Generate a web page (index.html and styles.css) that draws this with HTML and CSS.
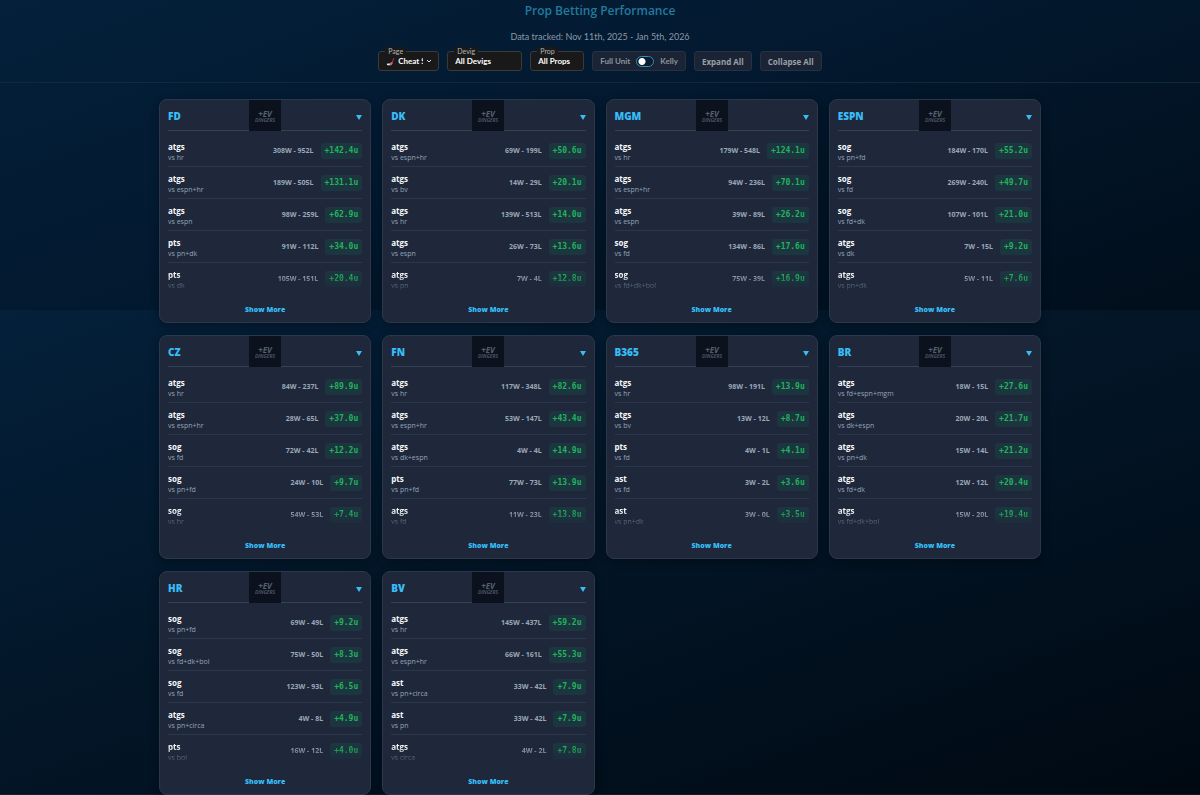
FILE: index.html
```html
<!DOCTYPE html>
<html lang="en">
<head>
  <meta charset="UTF-8" />
  <meta name="viewport" content="width=device-width, initial-scale=1.0"/>
  <title>Prop Betting Performance</title>
  <link rel="stylesheet" href="styles.css">
</head>
<body>

  <header class="page-header">
    <h1>Prop Betting Performance</h1>
    <p class="tracked">Data tracked: Nov 11th, 2025 - Jan 5th, 2026</p>

    <div class="controls">
      <div class="field field-page">
        <label for="pageSelect">Page</label>
        <svg class="stick" viewBox="0 0 16 16" aria-hidden="true">
          <path d="M14 2 11 10" stroke="#b02a3c" stroke-width="2" fill="none"/>
          <path d="M10 11 8 13H3" stroke="#ece6e8" stroke-width="3" fill="none" stroke-linejoin="round" stroke-linecap="round"/>
          <path d="M11 10 7 14" stroke="#d8404c" stroke-width="2"/>
        </svg>
        <select id="pageSelect">
          <option>Cheat Sheet</option>
        </select>
        <svg class="chevron" viewBox="0 0 8 8" aria-hidden="true"><path d="M2 3 4 5 6 3" stroke="#ddd" fill="none"/></svg>
      </div>
      <div class="field field-devig">
        <label for="devigSelect">Devig</label>
        <select id="devigSelect">
          <option>All Devigs</option>
        </select>
      </div>
      <div class="field field-prop">
        <label for="propSelect">Prop</label>
        <select id="propSelect">
          <option>All Props</option>
        </select>
      </div>
      <label class="toggle" for="kellyToggle">
        <span>Full Unit</span>
        <input type="checkbox" role="switch" id="kellyToggle">
        <span>Kelly</span>
      </label>
      <button class="btn" id="expandAll">Expand All</button>
      <button class="btn" id="collapseAll">Collapse All</button>
    </div>
  </header>

  <main class="grid" id="grid"></main>

  <script src="script.js"></script>
</body>
</html>
```
FILE: styles.css
```css
* { box-sizing: border-box; margin: 0; padding: 0; }

html {
  background:
    linear-gradient(160deg, #04203a 0%, #031a31 40%, #010e1b 100%) top / 100% 39vh no-repeat,
    linear-gradient(160deg, #04203a 0%, #031628 45%, #000912 100%) bottom / 100% 61vh no-repeat;
  background-attachment: fixed;
}

body {
  min-height: 100vh;
  font-family: 'Segoe UI', 'Open Sans', sans-serif;
  color: #f8fafc;
}

button, select, input { font-family: inherit; }

/* Header */
.page-header {
  text-align: center;
  padding-bottom: 11px;
  border-bottom: 1px solid #12283c;
}

h1 {
  font-size: 12px;
  line-height: 22px;
  font-weight: 600;
  color: #227a9c;
}

.tracked {
  margin-top: 8px;
  font-family: 'Segoe UI', Lato, sans-serif;
  font-size: 9px;
  line-height: 13px;
  color: #8b98a7;
}

.controls {
  display: flex;
  justify-content: center;
  flex-wrap: wrap;
  gap: 8px;
  margin-top: 8px;
}

.field {
  position: relative;
  display: flex;
  align-items: center;
  height: 20px;
  background: #191919;
  border: 1px solid #3a3a38;
  border-radius: 3px;
}

.field-page { width: 61px; padding-left: 7px; }
.field-devig { width: 75px; }
.field-prop { width: 54px; }

.field label {
  position: absolute;
  top: -5px;
  left: 6px;
  padding: 0 3px;
  font-family: 'Segoe UI', Lato, sans-serif;
  font-size: 7px;
  line-height: 9px;
  color: #b5b5b5;
  background: #191919;
  border-radius: 2px;
}

.field select {
  appearance: none;
  width: 100%;
  min-width: 0;
  padding: 0 7px;
  border: none;
  outline: none;
  background: transparent;
  color: #fff;
  font-family: 'Segoe UI', Lato, sans-serif;
  font-size: 8px;
  font-weight: 700;
}

.field-page select { padding: 0 0 0 3px; width: 28px; }

.stick { width: 9px; height: 9px; flex: none; }
.chevron { width: 8px; height: 8px; margin-left: 2px; flex: none; }

.toggle, .btn {
  height: 20px;
  background: #1b2435;
  border: 1px solid #263143;
  border-radius: 3px;
  font-size: 8px;
  color: #8b949f;
}

.toggle {
  display: flex;
  align-items: center;
  gap: 6px;
  padding: 0 7px;
  font-family: 'Segoe UI', Lato, sans-serif;
  font-weight: 700;
}

.toggle input {
  appearance: none;
  width: 18px;
  height: 11px;
  border: 1px solid #2c8fb8;
  border-radius: 6px;
  background: radial-gradient(circle at 5px 50%, #fff 3px, transparent 4px) #0b1c2f;
}

.toggle input:checked {
  background: radial-gradient(circle at 11px 50%, #fff 3px, transparent 4px) #0b1c2f;
}

.btn {
  padding: 0 7px;
  font-weight: 700;
  color: #99a0a8;
  cursor: pointer;
}

/* Sportsbook cards */
.grid {
  display: grid;
  grid-template-columns: repeat(4, 1fr);
  gap: 12px 11px;
  max-width: 882px;
  margin: 0 auto;
  padding-top: 16px;
}

.card {
  background: #1e283a;
  border: 1px solid #2b384b;
  border-radius: 8px;
  padding: 0 8px;
  box-shadow: 0 3px 8px rgba(0, 0, 0, 0.3);
}

.card-head {
  display: grid;
  grid-template-columns: 1fr 32px 1fr;
  align-items: center;
  height: 31px;
  border-bottom: 1px solid #334155;
}

.card-head h2 {
  font-size: 10px;
  line-height: 14px;
  font-weight: 800;
  color: #38bdf8;
}

.logo { width: 32px; height: 31px; }

.collapse {
  justify-self: end;
  border: none;
  background: none;
  width: 6px;
  padding-top: 3px;
  cursor: pointer;
}

.collapse svg { display: block; width: 6px; height: 5px; }

.rows { list-style: none; padding-top: 4px; }

.row {
  display: flex;
  align-items: center;
  height: 32px;
  border-bottom: 1px solid #2b374a;
}

.row:last-child {
  border-bottom-color: transparent;
  -webkit-mask-image: linear-gradient(to bottom, #000 35%, transparent);
  mask-image: linear-gradient(to bottom, #000 35%, transparent);
}

.bet { flex: 1; padding-top: 2px; }

.bet strong {
  display: block;
  font-size: 8px;
  line-height: 11px;
}

.bet small {
  display: block;
  font-size: 7px;
  line-height: 11px;
  color: #94a3b8;
}

.record {
  font-size: 7px;
  font-weight: 700;
  color: #9aa7b8;
}

.units {
  margin-left: 7px;
  padding: 0 4px;
  border-radius: 3px;
  background: #1c3640;
  font-family: 'DejaVu Sans Mono', monospace;
  font-size: 8px;
  line-height: 16px;
  font-weight: 700;
  color: #22b35c;
}

.more {
  display: block;
  width: 100%;
  height: 27px;
  padding-top: 2px;
  border: none;
  background: none;
  font-size: 7px;
  font-weight: 800;
  color: #38bdf8;
  cursor: pointer;
}

.card.collapsed .rows, .card.collapsed .more { display: none; }

@media (max-width: 800px) {
  .grid { grid-template-columns: repeat(2, 1fr); padding: 16px 12px; }
}
```
FILE: script.js
```js
// book: [prop, devig, wins, losses, units]
const books = {
  FD: [['atgs', 'hr', 308, 952, '142.4'], ['atgs', 'espn+hr', 189, 505, '131.1'], ['atgs', 'espn', 98, 259, '62.9'], ['pts', 'pn+dk', 91, 112, '34.0'], ['pts', 'dk', 105, 151, '20.4']],
  DK: [['atgs', 'espn+hr', 69, 199, '50.6'], ['atgs', 'bv', 14, 29, '20.1'], ['atgs', 'hr', 139, 513, '14.0'], ['atgs', 'espn', 26, 73, '13.6'], ['atgs', 'pn', 7, 4, '12.8']],
  MGM: [['atgs', 'hr', 179, 548, '124.1'], ['atgs', 'espn+hr', 94, 236, '70.1'], ['atgs', 'espn', 39, 89, '26.2'], ['sog', 'fd', 134, 86, '17.6'], ['sog', 'fd+dk+bol', 75, 39, '16.9']],
  ESPN: [['sog', 'pn+fd', 184, 170, '55.2'], ['sog', 'fd', 269, 240, '49.7'], ['sog', 'fd+dk', 107, 101, '21.0'], ['atgs', 'dk', 7, 15, '9.2'], ['atgs', 'pn+dk', 5, 11, '7.6']],
  CZ: [['atgs', 'hr', 84, 237, '89.9'], ['atgs', 'espn+hr', 28, 65, '37.0'], ['sog', 'fd', 72, 42, '12.2'], ['sog', 'pn+fd', 24, 10, '9.7'], ['sog', 'hr', 54, 53, '7.4']],
  FN: [['atgs', 'hr', 117, 348, '82.6'], ['atgs', 'espn+hr', 53, 147, '43.4'], ['atgs', 'dk+espn', 4, 4, '14.9'], ['pts', 'pn+fd', 77, 73, '13.9'], ['atgs', 'fd', 11, 23, '13.8']],
  B365: [['atgs', 'hr', 98, 191, '13.9'], ['atgs', 'bv', 13, 12, '8.7'], ['pts', 'fd', 4, 1, '4.1'], ['ast', 'fd', 3, 2, '3.6'], ['ast', 'pn+dk', 3, 0, '3.5']],
  BR: [['atgs', 'fd+espn+mgm', 18, 15, '27.6'], ['atgs', 'dk+espn', 20, 20, '21.7'], ['atgs', 'pn+dk', 15, 14, '21.2'], ['atgs', 'fd+dk', 12, 12, '20.4'], ['atgs', 'fd+dk+bol', 15, 20, '19.4']],
  HR: [['sog', 'pn+fd', 69, 49, '9.2'], ['sog', 'fd+dk+bol', 75, 50, '8.3'], ['sog', 'fd', 123, 93, '6.5'], ['atgs', 'pn+circa', 4, 8, '4.9'], ['pts', 'bol', 16, 12, '4.0']],
  BV: [['atgs', 'hr', 145, 437, '59.2'], ['atgs', 'espn+hr', 66, 161, '55.3'], ['ast', 'pn+circa', 33, 42, '7.9'], ['ast', 'pn', 33, 42, '7.9'], ['atgs', 'circa', 4, 2, '7.8']]
};

const grid = document.getElementById('grid');

function rowHtml([prop, devig, w, l, units]) {
  return `
    <li class="row">
      <div class="bet"><strong>${prop}</strong><small>vs ${devig}</small></div>
      <span class="record">${w}W - ${l}L</span>
      <span class="units">+${units}u</span>
    </li>`;
}

grid.innerHTML = Object.entries(books).map(([book, rows]) => `
  <section class="card">
    <div class="card-head">
      <h2>${book}</h2>
      <svg class="logo" viewBox="0 0 32 31" role="img" aria-label="+EV Dingers">
        <rect width="32" height="31" fill="#0b121e"/>
        <g fill="#566070" font-family="Open Sans, sans-serif" font-style="italic" text-anchor="middle">
          <text x="16" y="17" font-size="8" font-weight="700">+EV</text>
          <text x="16" y="22" font-size="5" font-weight="600">DINGERS</text>
        </g>
      </svg>
      <button class="collapse" aria-label="Toggle ${book}">
        <svg viewBox="0 0 6 5"><path d="M0 0h6L3 5z" fill="#38bdf8"/></svg>
      </button>
    </div>
    <ul class="rows">${rows.map(rowHtml).join('')}</ul>
    <button class="more">Show More</button>
  </section>`).join('');

const cards = document.querySelectorAll('.card');

cards.forEach(card => {
  card.querySelector('.collapse').addEventListener('click', () => card.classList.toggle('collapsed'));
});

document.getElementById('expandAll').addEventListener('click', () => {
  cards.forEach(card => card.classList.remove('collapsed'));
});

document.getElementById('collapseAll').addEventListener('click', () => {
  cards.forEach(card => card.classList.add('collapsed'));
});
```
